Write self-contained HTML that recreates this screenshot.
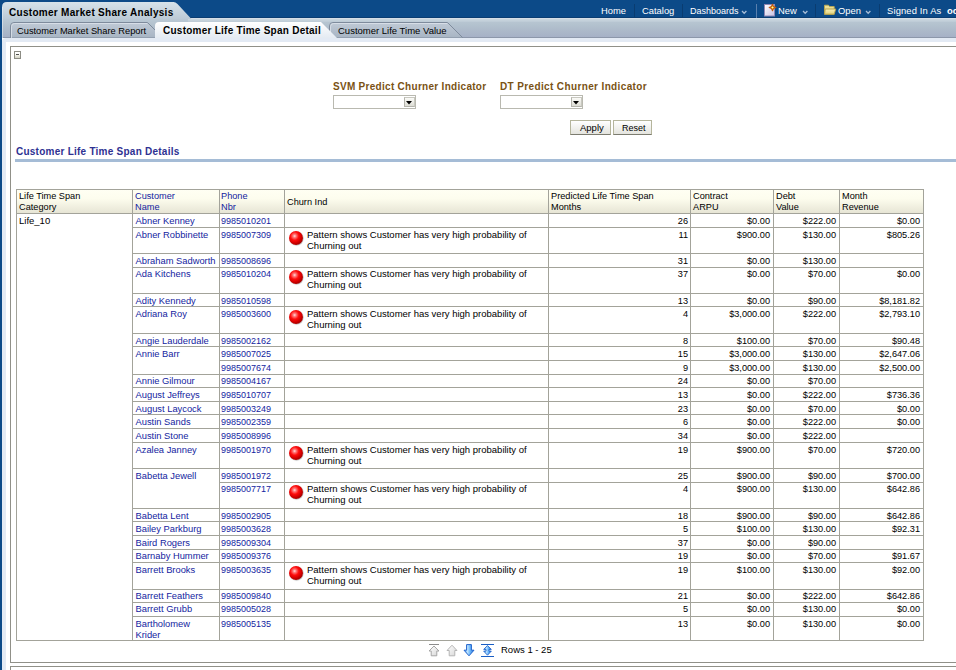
<!DOCTYPE html><html><head><meta charset="utf-8"><style>
*{margin:0;padding:0;box-sizing:border-box}
html,body{width:956px;height:670px;overflow:hidden;background:#fff;font-family:"Liberation Sans",sans-serif;position:relative}
.a{position:absolute}
.t{position:absolute;white-space:nowrap;font-size:9.5px;line-height:11px;color:#000}
.lk{color:#1424a0}
.nm{font-size:9.2px}
.nmn{font-size:9.35px}
.ph{font-size:9px}
.hd{font-size:9.2px}
.hl{position:absolute;height:1px;background:#a3a39a}
.vl{position:absolute;width:1px;background:#a3a39a}
.nav{position:absolute;top:4px;font-size:9.4px;line-height:14px;color:#fff;white-space:nowrap}
.sep{position:absolute;top:4px;width:1px;height:14px;background:#0a3c70}
.chev{position:absolute;top:10px}
.ball{position:absolute;width:14px;height:14px;border-radius:50%;background:radial-gradient(circle at 40% 36%,#ffdede 0,#ff7a7a 13%,#ff0c0c 34%,#d40000 56%,#8e0000 80%,#3a0000 100%);box-shadow:0.5px 0.5px 0.8px rgba(0,0,0,0.35)}
</style></head><body>
<div class="a" style="left:0;top:0;width:956px;height:18px;background:#0c4a88"></div>
<div class="a" style="left:0;top:17px;width:956px;height:1px;background:#0a3d72"></div>
<div class="a" style="left:0;top:0;width:2px;height:670px;background:#0c4a88"></div>
<div class="a" style="left:2px;top:18px;width:954px;height:20px;background:linear-gradient(#bccad6 0,#b4c3cf 6px,#acb9c9 13px,#a6b1c6 19px,#8c97aa 19px)"></div>
<div class="a" style="left:188px;top:18px;width:768px;height:1px;background:#d6dee7"></div>
<div class="a" style="left:188px;top:19px;width:768px;height:3px;background:linear-gradient(#ccd8e0,#bccad5)"></div>
<svg class="a" style="left:2px;top:2px" width="192" height="17" viewBox="0 0 192 17">
<defs><linearGradient id="tt" x1="0" y1="0" x2="0" y2="1"><stop offset="0" stop-color="#d6e2ea"/><stop offset="1" stop-color="#bccad6"/></linearGradient></defs>
<path d="M0 17 L0 5 Q0 0 5 0 L171.5 0 Q173.5 0 175.5 2 L188.5 16 L189.5 17 Z" fill="url(#tt)"/></svg>
<div class="a" style="left:2px;top:7px;width:1px;height:31px;background:linear-gradient(#dfe7ee,#c9d3dd)"></div>
<div class="t" style="left:9px;top:6px;font-size:10px;letter-spacing:0.29px;line-height:14px;font-weight:bold;color:#000">Customer Market Share Analysis</div>
<div class="nav" style="left:601px">Home</div>
<div class="sep" style="left:634px"></div>
<div class="nav" style="left:642px">Catalog</div>
<div class="sep" style="left:682px"></div>
<div class="nav" style="left:690px;font-size:9px">Dashboards</div>
<svg class="chev" style="left:741px" width="7" height="5" viewBox="0 0 7 5"><path d="M1 1 L3.2 3.3 L5.4 1" stroke="#a6bcd6" stroke-width="1.25" fill="none"/></svg>
<div class="a" style="left:756px;top:4px;width:1px;height:14px;background:#5a80ae"></div>
<svg class="a" style="left:763px;top:3px" width="15" height="14" viewBox="0 0 15 14">
<defs><linearGradient id="doc" x1="0" y1="0" x2="1" y2="1"><stop offset="0" stop-color="#ffffff"/><stop offset="1" stop-color="#c9c2e2"/></linearGradient>
<radialGradient id="star" cx="0.5" cy="0.5" r="0.5"><stop offset="0" stop-color="#fff6a0"/><stop offset="0.5" stop-color="#f5c400"/><stop offset="1" stop-color="#d07000"/></radialGradient></defs>
<rect x="1.5" y="1.5" width="10" height="11.5" fill="url(#doc)" stroke="#8f86b2" stroke-width="1"/>
<path d="M9.5 1.2 L10.5 3.5 L12.8 4.5 L10.5 5.5 L9.5 7.8 L8.5 5.5 L6.2 4.5 L8.5 3.5 Z" fill="url(#star)" stroke="#c05a10" stroke-width="1.1" stroke-linejoin="round"/></svg>
<div class="nav" style="left:778px">New</div>
<svg class="chev" style="left:802px" width="7" height="5" viewBox="0 0 7 5"><path d="M1 1 L3.2 3.3 L5.4 1" stroke="#a6bcd6" stroke-width="1.25" fill="none"/></svg>
<div class="sep" style="left:815px"></div>
<svg class="a" style="left:823px;top:4px" width="14" height="11" viewBox="0 0 14 11">
<defs><linearGradient id="fold" x1="0" y1="0" x2="0" y2="1"><stop offset="0" stop-color="#f7f0b8"/><stop offset="1" stop-color="#e2d27e"/></linearGradient></defs>
<path d="M1.5 1.2 L5.5 1.2 L6.5 2.5 L11.2 2.5 L11.2 10.2 L1.5 10.2 Z" fill="#ecdf95" stroke="#bba850" stroke-width="0.9"/>
<path d="M2.2 5 L12.8 5 L11.2 10.2 L1.5 10.2 Z" fill="url(#fold)" stroke="#b39d45" stroke-width="0.9"/></svg>
<div class="nav" style="left:838px">Open</div>
<svg class="chev" style="left:865px" width="7" height="5" viewBox="0 0 7 5"><path d="M1 1 L3.2 3.3 L5.4 1" stroke="#a6bcd6" stroke-width="1.25" fill="none"/></svg>
<div class="sep" style="left:879px"></div>
<div class="nav" style="left:887px;letter-spacing:0.15px">Signed In As</div>
<div class="nav" style="left:947px;font-weight:bold">oc</div>
<svg class="a" style="left:10px;top:22px" width="150" height="16" viewBox="0 0 150 16">
<defs><linearGradient id="t1" x1="0" y1="0" x2="0" y2="1"><stop offset="0" stop-color="#c0cad6"/><stop offset="1" stop-color="#a7b4c3"/></linearGradient></defs>
<path d="M0.5 16 L0.5 4 Q0.5 0.5 4 0.5 L137.5 0.5 L150 13 L150 16 Z" fill="url(#t1)" stroke="#7e8b9c" stroke-width="1"/>
<path d="M1.5 16 L1.5 4.5 Q1.5 1.5 4.5 1.5 L137 1.5" fill="none" stroke="#dde4eb" stroke-width="1" opacity="0.8"/></svg>
<div class="t" style="left:17px;top:25px;font-size:9.3px;line-height:12px;color:#000">Customer Market Share Report</div>
<svg class="a" style="left:329px;top:22px" width="135" height="16" viewBox="0 0 135 16">
<defs><linearGradient id="t3" x1="0" y1="0" x2="0" y2="1"><stop offset="0" stop-color="#c0cad6"/><stop offset="1" stop-color="#a7b4c3"/></linearGradient></defs>
<path d="M0.5 16 L0.5 4 Q0.5 0.5 4 0.5 L118.5 0.5 L133.5 15.5 L133.5 16 Z" fill="url(#t3)" stroke="#7e8b9c" stroke-width="1"/>
<path d="M1.5 16 L1.5 4.5 Q1.5 1.5 4.5 1.5 L118 1.5" fill="none" stroke="#dde4eb" stroke-width="1" opacity="0.8"/></svg>
<div class="t" style="left:338px;top:25px;font-size:9.5px;line-height:12px;color:#000">Customer Life Time Value</div>
<svg class="a" style="left:155px;top:22px" width="184" height="17" viewBox="0 0 184 17">
<defs><linearGradient id="ta" x1="0" y1="0" x2="0" y2="1"><stop offset="0" stop-color="#ffffff"/><stop offset="1" stop-color="#e2e9f1"/></linearGradient></defs>
<path d="M0 17 L0 4 Q0 0 4 0 L166 0 L183 17 Z" fill="url(#ta)"/></svg>
<div class="t" style="left:163px;top:25px;font-size:10px;letter-spacing:0.25px;line-height:12px;font-weight:bold;color:#000">Customer Life Time Span Detail</div>
<div class="a" style="left:2px;top:38px;width:954px;height:632px;background:#e3eaf4;border-top-left-radius:4px"></div>
<div class="a" style="left:6px;top:42px;width:950px;height:628px;background:#fff"></div>
<div class="a" style="left:10px;top:46px;width:946px;height:617px;border-left:1px solid #909088;border-top:1px solid #909088;border-bottom:1px solid #909088"></div>
<div class="a" style="left:10px;top:666px;width:946px;height:10px;border-left:1px solid #909088;border-top:1px solid #909088"></div>
<div class="a" style="left:14px;top:51px;width:7px;height:8px;border:1px solid #8c8c84;background:linear-gradient(#ffffff 20%,#f6f6ee 45%,#d4d4c6)"></div>
<div class="a" style="left:16px;top:54px;width:3px;height:1px;background:#505050"></div>
<div class="t" style="left:333px;top:81px;font-size:10px;letter-spacing:0.29px;line-height:12px;font-weight:bold;color:#7a5214">SVM Predict Churner Indicator</div>
<div class="t" style="left:500px;top:81px;font-size:10px;letter-spacing:0.37px;line-height:12px;font-weight:bold;color:#7a5214">DT Predict Churner Indicator</div>
<div class="a" style="left:333px;top:95px;width:83px;height:14px;border:1px solid #b9b9b0;background:#fff"></div>
<div class="a" style="left:404px;top:97px;width:11px;height:10px;background:linear-gradient(#fbfbf8,#dcdcd4);border:1px solid #c8c8c0;border-left-color:#b4b4ac;border-bottom-color:#b4b4ac"></div>
<svg class="a" style="left:406px;top:101px" width="6" height="4" viewBox="0 0 6 4"><path d="M0 0 L6 0 L3 3.5 Z" fill="#000"/></svg>
<div class="a" style="left:500px;top:95px;width:83px;height:14px;border:1px solid #b9b9b0;background:#fff"></div>
<div class="a" style="left:571px;top:97px;width:11px;height:10px;background:linear-gradient(#fbfbf8,#dcdcd4);border:1px solid #c8c8c0;border-left-color:#b4b4ac;border-bottom-color:#b4b4ac"></div>
<svg class="a" style="left:573px;top:101px" width="6" height="4" viewBox="0 0 6 4"><path d="M0 0 L6 0 L3 3.5 Z" fill="#000"/></svg>
<div class="a" style="left:570px;top:120px;width:41px;height:15px;border:1px solid #b5b59c;border-bottom-color:#7c7c70;background:linear-gradient(#ffffff,#e4e4de)"></div>
<div class="t" style="left:580px;top:122px;font-size:9.5px;line-height:11px;color:#000">Apply</div>
<div class="a" style="left:613px;top:120px;width:39px;height:15px;border:1px solid #b5b59c;border-bottom-color:#7c7c70;background:linear-gradient(#ffffff,#e4e4de)"></div>
<div class="t" style="left:622px;top:123px;font-size:9px;line-height:11px;color:#000">Reset</div>
<div class="t" style="left:16px;top:146px;font-size:10px;letter-spacing:0.243px;line-height:12px;font-weight:bold;color:#2e3192">Customer Life Time Span Details</div>
<div class="a" style="left:15px;top:159px;width:941px;height:3px;background:#a5bcd6"></div>
<div class="a" style="left:16px;top:189px;width:908px;height:24px;background:linear-gradient(#fffff3,#fdfdee 40%,#e7e5d5)"></div>
<div class="hl" style="left:16px;top:189px;width:908px"></div>
<div class="hl" style="left:16px;top:213px;width:908px"></div>
<div class="hl" style="left:132px;top:227px;width:792px"></div>
<div class="hl" style="left:132px;top:253px;width:792px"></div>
<div class="hl" style="left:132px;top:267px;width:792px"></div>
<div class="hl" style="left:132px;top:293px;width:792px"></div>
<div class="hl" style="left:132px;top:306px;width:792px"></div>
<div class="hl" style="left:132px;top:333px;width:792px"></div>
<div class="hl" style="left:132px;top:346px;width:792px"></div>
<div class="hl" style="left:219px;top:360px;width:705px"></div>
<div class="hl" style="left:132px;top:374px;width:792px"></div>
<div class="hl" style="left:132px;top:387px;width:792px"></div>
<div class="hl" style="left:132px;top:401px;width:792px"></div>
<div class="hl" style="left:132px;top:414px;width:792px"></div>
<div class="hl" style="left:132px;top:428px;width:792px"></div>
<div class="hl" style="left:132px;top:442px;width:792px"></div>
<div class="hl" style="left:132px;top:468px;width:792px"></div>
<div class="hl" style="left:219px;top:482px;width:705px"></div>
<div class="hl" style="left:132px;top:508px;width:792px"></div>
<div class="hl" style="left:132px;top:521px;width:792px"></div>
<div class="hl" style="left:132px;top:535px;width:792px"></div>
<div class="hl" style="left:132px;top:549px;width:792px"></div>
<div class="hl" style="left:132px;top:562px;width:792px"></div>
<div class="hl" style="left:132px;top:589px;width:792px"></div>
<div class="hl" style="left:132px;top:602px;width:792px"></div>
<div class="hl" style="left:132px;top:616px;width:792px"></div>
<div class="hl" style="left:16px;top:640px;width:908px"></div>
<div class="vl" style="left:16px;top:189px;height:452px"></div>
<div class="vl" style="left:132px;top:189px;height:452px"></div>
<div class="vl" style="left:219px;top:189px;height:452px"></div>
<div class="vl" style="left:284px;top:189px;height:452px"></div>
<div class="vl" style="left:548px;top:189px;height:452px"></div>
<div class="vl" style="left:690px;top:189px;height:452px"></div>
<div class="vl" style="left:773px;top:189px;height:452px"></div>
<div class="vl" style="left:839px;top:189px;height:452px"></div>
<div class="vl" style="left:923px;top:189px;height:452px"></div>
<div class="t  hd" style="left:19px;top:191.00px;">Life Time Span<br>Category</div>
<div class="t lk hd" style="left:135px;top:191.00px;">Customer<br>Name</div>
<div class="t lk hd" style="left:221px;top:191.00px;">Phone<br>Nbr</div>
<div class="t  hd" style="left:287px;top:197.00px;">Churn Ind</div>
<div class="t  hd" style="left:551px;top:191.00px;">Predicted Life Time Span<br>Months</div>
<div class="t  hd" style="left:693px;top:191.00px;">Contract<br>ARPU</div>
<div class="t  hd" style="left:776px;top:191.00px;">Debt<br>Value</div>
<div class="t  hd" style="left:842px;top:191.00px;">Month<br>Revenue</div>
<div class="t " style="left:19px;top:215.00px;">Life_10</div>
<div class="t lk nmn" style="left:135.5px;top:216.00px;">Abner Kenney</div>
<div class="t lk ph" style="left:221px;top:216.00px;">9985010201</div>
<div class="t nm" style="right:268px;top:216.00px;">26</div>
<div class="t nm" style="right:186px;top:216.00px;">$0.00</div>
<div class="t nm" style="right:120px;top:216.00px;">$222.00</div>
<div class="t nm" style="right:36px;top:216.00px;">$0.00</div>
<div class="t lk nmn" style="left:135.5px;top:230.00px;">Abner Robbinette</div>
<div class="t lk ph" style="left:221px;top:230.00px;">9985007309</div>
<div class="ball" style="left:289px;top:230.5px"></div>
<div class="t " style="left:307px;top:229.00px;">Pattern shows Customer has very high probability of<br>Churning out</div>
<div class="t nm" style="right:268px;top:230.00px;">11</div>
<div class="t nm" style="right:186px;top:230.00px;">$900.00</div>
<div class="t nm" style="right:120px;top:230.00px;">$130.00</div>
<div class="t nm" style="right:36px;top:230.00px;">$805.26</div>
<div class="t lk nmn" style="left:135.5px;top:256.00px;">Abraham Sadworth</div>
<div class="t lk ph" style="left:221px;top:256.00px;">9985008696</div>
<div class="t nm" style="right:268px;top:256.00px;">31</div>
<div class="t nm" style="right:186px;top:256.00px;">$0.00</div>
<div class="t nm" style="right:120px;top:256.00px;">$130.00</div>
<div class="t nm" style="right:36px;top:256.00px;"></div>
<div class="t lk nmn" style="left:135.5px;top:269.00px;">Ada Kitchens</div>
<div class="t lk ph" style="left:221px;top:269.00px;">9985010204</div>
<div class="ball" style="left:289px;top:269.5px"></div>
<div class="t " style="left:307px;top:268.00px;">Pattern shows Customer has very high probability of<br>Churning out</div>
<div class="t nm" style="right:268px;top:269.00px;">37</div>
<div class="t nm" style="right:186px;top:269.00px;">$0.00</div>
<div class="t nm" style="right:120px;top:269.00px;">$70.00</div>
<div class="t nm" style="right:36px;top:269.00px;">$0.00</div>
<div class="t lk nmn" style="left:135.5px;top:296.00px;">Adity Kennedy</div>
<div class="t lk ph" style="left:221px;top:296.00px;">9985010598</div>
<div class="t nm" style="right:268px;top:296.00px;">13</div>
<div class="t nm" style="right:186px;top:296.00px;">$0.00</div>
<div class="t nm" style="right:120px;top:296.00px;">$90.00</div>
<div class="t nm" style="right:36px;top:296.00px;">$8,181.82</div>
<div class="t lk nmn" style="left:135.5px;top:309.00px;">Adriana Roy</div>
<div class="t lk ph" style="left:221px;top:309.00px;">9985003600</div>
<div class="ball" style="left:289px;top:309.5px"></div>
<div class="t " style="left:307px;top:308.00px;">Pattern shows Customer has very high probability of<br>Churning out</div>
<div class="t nm" style="right:268px;top:309.00px;">4</div>
<div class="t nm" style="right:186px;top:309.00px;">$3,000.00</div>
<div class="t nm" style="right:120px;top:309.00px;">$222.00</div>
<div class="t nm" style="right:36px;top:309.00px;">$2,793.10</div>
<div class="t lk nmn" style="left:135.5px;top:336.00px;">Angie Lauderdale</div>
<div class="t lk ph" style="left:221px;top:336.00px;">9985002162</div>
<div class="t nm" style="right:268px;top:336.00px;">8</div>
<div class="t nm" style="right:186px;top:336.00px;">$100.00</div>
<div class="t nm" style="right:120px;top:336.00px;">$70.00</div>
<div class="t nm" style="right:36px;top:336.00px;">$90.48</div>
<div class="t lk nmn" style="left:135.5px;top:349.00px;">Annie Barr</div>
<div class="t lk ph" style="left:221px;top:349.00px;">9985007025</div>
<div class="t nm" style="right:268px;top:349.00px;">15</div>
<div class="t nm" style="right:186px;top:349.00px;">$3,000.00</div>
<div class="t nm" style="right:120px;top:349.00px;">$130.00</div>
<div class="t nm" style="right:36px;top:349.00px;">$2,647.06</div>
<div class="t lk ph" style="left:221px;top:363.00px;">9985007674</div>
<div class="t nm" style="right:268px;top:363.00px;">9</div>
<div class="t nm" style="right:186px;top:363.00px;">$3,000.00</div>
<div class="t nm" style="right:120px;top:363.00px;">$130.00</div>
<div class="t nm" style="right:36px;top:363.00px;">$2,500.00</div>
<div class="t lk nmn" style="left:135.5px;top:376.00px;">Annie Gilmour</div>
<div class="t lk ph" style="left:221px;top:376.00px;">9985004167</div>
<div class="t nm" style="right:268px;top:376.00px;">24</div>
<div class="t nm" style="right:186px;top:376.00px;">$0.00</div>
<div class="t nm" style="right:120px;top:376.00px;">$70.00</div>
<div class="t nm" style="right:36px;top:376.00px;"></div>
<div class="t lk nmn" style="left:135.5px;top:390.00px;">August Jeffreys</div>
<div class="t lk ph" style="left:221px;top:390.00px;">9985010707</div>
<div class="t nm" style="right:268px;top:390.00px;">13</div>
<div class="t nm" style="right:186px;top:390.00px;">$0.00</div>
<div class="t nm" style="right:120px;top:390.00px;">$222.00</div>
<div class="t nm" style="right:36px;top:390.00px;">$736.36</div>
<div class="t lk nmn" style="left:135.5px;top:404.00px;">August Laycock</div>
<div class="t lk ph" style="left:221px;top:404.00px;">9985003249</div>
<div class="t nm" style="right:268px;top:404.00px;">23</div>
<div class="t nm" style="right:186px;top:404.00px;">$0.00</div>
<div class="t nm" style="right:120px;top:404.00px;">$70.00</div>
<div class="t nm" style="right:36px;top:404.00px;">$0.00</div>
<div class="t lk nmn" style="left:135.5px;top:417.00px;">Austin Sands</div>
<div class="t lk ph" style="left:221px;top:417.00px;">9985002359</div>
<div class="t nm" style="right:268px;top:417.00px;">6</div>
<div class="t nm" style="right:186px;top:417.00px;">$0.00</div>
<div class="t nm" style="right:120px;top:417.00px;">$222.00</div>
<div class="t nm" style="right:36px;top:417.00px;">$0.00</div>
<div class="t lk nmn" style="left:135.5px;top:431.00px;">Austin Stone</div>
<div class="t lk ph" style="left:221px;top:431.00px;">9985008996</div>
<div class="t nm" style="right:268px;top:431.00px;">34</div>
<div class="t nm" style="right:186px;top:431.00px;">$0.00</div>
<div class="t nm" style="right:120px;top:431.00px;">$222.00</div>
<div class="t nm" style="right:36px;top:431.00px;"></div>
<div class="t lk nmn" style="left:135.5px;top:445.00px;">Azalea Janney</div>
<div class="t lk ph" style="left:221px;top:445.00px;">9985001970</div>
<div class="ball" style="left:289px;top:445.5px"></div>
<div class="t " style="left:307px;top:444.00px;">Pattern shows Customer has very high probability of<br>Churning out</div>
<div class="t nm" style="right:268px;top:445.00px;">19</div>
<div class="t nm" style="right:186px;top:445.00px;">$900.00</div>
<div class="t nm" style="right:120px;top:445.00px;">$70.00</div>
<div class="t nm" style="right:36px;top:445.00px;">$720.00</div>
<div class="t lk nmn" style="left:135.5px;top:471.00px;">Babetta Jewell</div>
<div class="t lk ph" style="left:221px;top:471.00px;">9985001972</div>
<div class="t nm" style="right:268px;top:471.00px;">25</div>
<div class="t nm" style="right:186px;top:471.00px;">$900.00</div>
<div class="t nm" style="right:120px;top:471.00px;">$90.00</div>
<div class="t nm" style="right:36px;top:471.00px;">$700.00</div>
<div class="t lk ph" style="left:221px;top:484.00px;">9985007717</div>
<div class="ball" style="left:289px;top:484.5px"></div>
<div class="t " style="left:307px;top:483.00px;">Pattern shows Customer has very high probability of<br>Churning out</div>
<div class="t nm" style="right:268px;top:484.00px;">4</div>
<div class="t nm" style="right:186px;top:484.00px;">$900.00</div>
<div class="t nm" style="right:120px;top:484.00px;">$130.00</div>
<div class="t nm" style="right:36px;top:484.00px;">$642.86</div>
<div class="t lk nmn" style="left:135.5px;top:511.00px;">Babetta Lent</div>
<div class="t lk ph" style="left:221px;top:511.00px;">9985002905</div>
<div class="t nm" style="right:268px;top:511.00px;">18</div>
<div class="t nm" style="right:186px;top:511.00px;">$900.00</div>
<div class="t nm" style="right:120px;top:511.00px;">$90.00</div>
<div class="t nm" style="right:36px;top:511.00px;">$642.86</div>
<div class="t lk nmn" style="left:135.5px;top:524.00px;">Bailey Parkburg</div>
<div class="t lk ph" style="left:221px;top:524.00px;">9985003628</div>
<div class="t nm" style="right:268px;top:524.00px;">5</div>
<div class="t nm" style="right:186px;top:524.00px;">$100.00</div>
<div class="t nm" style="right:120px;top:524.00px;">$130.00</div>
<div class="t nm" style="right:36px;top:524.00px;">$92.31</div>
<div class="t lk nmn" style="left:135.5px;top:538.00px;">Baird Rogers</div>
<div class="t lk ph" style="left:221px;top:538.00px;">9985009304</div>
<div class="t nm" style="right:268px;top:538.00px;">37</div>
<div class="t nm" style="right:186px;top:538.00px;">$0.00</div>
<div class="t nm" style="right:120px;top:538.00px;">$90.00</div>
<div class="t nm" style="right:36px;top:538.00px;"></div>
<div class="t lk nmn" style="left:135.5px;top:551.00px;">Barnaby Hummer</div>
<div class="t lk ph" style="left:221px;top:551.00px;">9985009376</div>
<div class="t nm" style="right:268px;top:551.00px;">19</div>
<div class="t nm" style="right:186px;top:551.00px;">$0.00</div>
<div class="t nm" style="right:120px;top:551.00px;">$70.00</div>
<div class="t nm" style="right:36px;top:551.00px;">$91.67</div>
<div class="t lk nmn" style="left:135.5px;top:565.00px;">Barrett Brooks</div>
<div class="t lk ph" style="left:221px;top:565.00px;">9985003635</div>
<div class="ball" style="left:289px;top:565.5px"></div>
<div class="t " style="left:307px;top:564.00px;">Pattern shows Customer has very high probability of<br>Churning out</div>
<div class="t nm" style="right:268px;top:565.00px;">19</div>
<div class="t nm" style="right:186px;top:565.00px;">$100.00</div>
<div class="t nm" style="right:120px;top:565.00px;">$130.00</div>
<div class="t nm" style="right:36px;top:565.00px;">$92.00</div>
<div class="t lk nmn" style="left:135.5px;top:591.00px;">Barrett Feathers</div>
<div class="t lk ph" style="left:221px;top:591.00px;">9985009840</div>
<div class="t nm" style="right:268px;top:591.00px;">21</div>
<div class="t nm" style="right:186px;top:591.00px;">$0.00</div>
<div class="t nm" style="right:120px;top:591.00px;">$222.00</div>
<div class="t nm" style="right:36px;top:591.00px;">$642.86</div>
<div class="t lk nmn" style="left:135.5px;top:604.00px;">Barrett Grubb</div>
<div class="t lk ph" style="left:221px;top:604.00px;">9985005028</div>
<div class="t nm" style="right:268px;top:604.00px;">5</div>
<div class="t nm" style="right:186px;top:604.00px;">$0.00</div>
<div class="t nm" style="right:120px;top:604.00px;">$130.00</div>
<div class="t nm" style="right:36px;top:604.00px;">$0.00</div>
<div class="t lk nmn" style="left:135.5px;top:619.00px;">Bartholomew<br>Krider</div>
<div class="t lk ph" style="left:221px;top:619.00px;">9985005135</div>
<div class="t nm" style="right:268px;top:619.00px;">13</div>
<div class="t nm" style="right:186px;top:619.00px;">$0.00</div>
<div class="t nm" style="right:120px;top:619.00px;">$130.00</div>
<div class="t nm" style="right:36px;top:619.00px;">$0.00</div>
<svg class="a" style="left:427px;top:643px" width="70" height="15" viewBox="0 0 70 15">
<defs>
<linearGradient id="gg" x1="0" y1="0" x2="1" y2="1"><stop offset="0" stop-color="#ffffff"/><stop offset="1" stop-color="#d6d6d6"/></linearGradient>
<linearGradient id="bg" x1="0" y1="0" x2="1" y2="0"><stop offset="0" stop-color="#4aa2f4"/><stop offset="0.35" stop-color="#bfe4ff"/><stop offset="0.6" stop-color="#6cb8fa"/><stop offset="1" stop-color="#2a78dc"/></linearGradient>
</defs>
<path d="M2 1.5 L12 1.5" stroke="#8c8c8c" stroke-width="1"/>
<path d="M7 3 L12 8 L9.8 8 L9.8 12.8 L4.2 12.8 L4.2 8 L2 8 Z" fill="url(#gg)" stroke="#a2a2a2" stroke-width="0.95" stroke-linejoin="round"/>
<path d="M25 2.2 L30 7.5 L27.8 7.5 L27.8 12.8 L22.2 12.8 L22.2 7.5 L20 7.5 Z" fill="url(#gg)" stroke="#b2b2b2" stroke-width="0.95" stroke-linejoin="round"/>
<path d="M39.6 1.6 L44.4 1.6 L44.4 7.2 L47 7.2 L42 12.8 L37 7.2 L39.6 7.2 Z" fill="url(#bg)" stroke="#1f62cc" stroke-width="1" stroke-linejoin="round"/>
<path d="M54 1.5 L67 1.5 M54 13.5 L67 13.5" stroke="#1a5ec4" stroke-width="1.1"/>
<path d="M60.5 2.6 L64.3 6.4 L62 6.4 L62 8.1 L64.3 8.1 L60.5 12.2 L56.7 8.1 L59 8.1 L59 6.4 L56.7 6.4 Z" fill="url(#bg)" stroke="#1f62cc" stroke-width="0.9" stroke-linejoin="round"/>
</svg>
<div class="t " style="left:501px;top:644.00px;">Rows 1 - 25</div>
</body></html>
